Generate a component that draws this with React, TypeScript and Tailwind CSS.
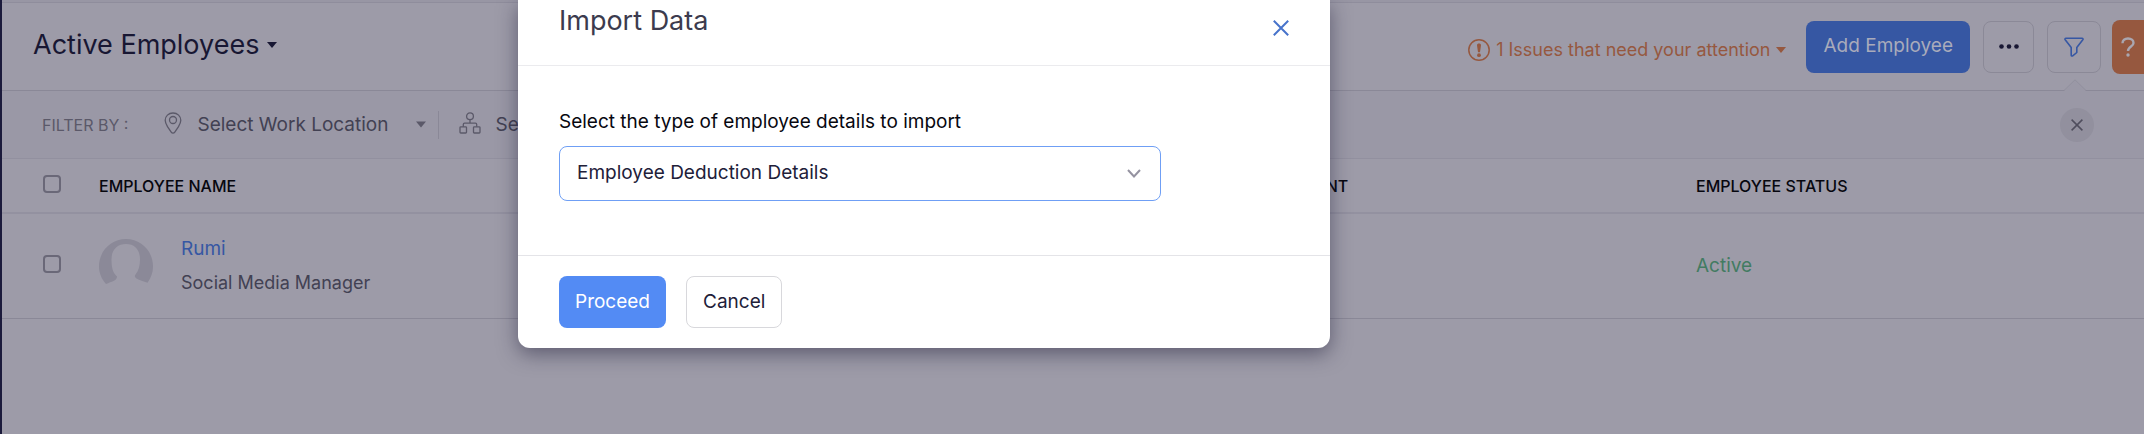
import React from "react";

function Caret({ className = "" }: { className?: string }) {
  return (
    <svg viewBox="0 0 10 6" className={className} fill="currentColor" aria-hidden="true">
      <path d="M0 0h10L5 6z" />
    </svg>
  );
}

function PinIcon() {
  return (
    <svg viewBox="0 0 18 22" className="h-[22px] w-[18px] shrink-0" fill="none" stroke="currentColor" strokeWidth="1.3" aria-hidden="true">
      <path d="M9 1C4.500 1 1.200 4.200 1.200 8.300c0 2 .9 4 2.300 6.400l3.700 5.400c1 1.400 2.600 1.400 3.600 0l3.700-5.400c1.400-2.400 2.300-4.400 2.300-6.400C16.800 4.200 13.500 1 9 1z" />
      <circle cx="9" cy="8" r="3.500" />
    </svg>
  );
}

function OrgIcon() {
  return (
    <svg viewBox="0 0 22 22" className="h-[22px] w-[22px] shrink-0" fill="none" stroke="currentColor" strokeWidth="1.3" aria-hidden="true">
      <circle cx="11" cy="4.300" r="3.400" />
      <path d="M11 7.700v3.500M4.300 14.800v-2.300c0-.8.500-1.300 1.300-1.300h10.800c.8 0 1.300.5 1.300 1.300v2.300" />
      <rect x="1" y="14.800" width="6.500" height="6.200" rx=".8" />
      <rect x="14.500" y="14.800" width="6.500" height="6.200" rx=".8" />
    </svg>
  );
}

function Avatar() {
  return (
    <svg viewBox="0 0 54 54" className="h-[54px] w-[54px] shrink-0" aria-hidden="true">
      <path
        fill="#8b8998"
        d="M7 45C2.500 40 0 34 0 27.500 0 12 12 0 27 0s27 12 27 27.500c0 6-2 11.500-5.500 16.200-4-1.700-8-2-11-4.200-1.600-1.200-2.200-2.600-1-4 3-3.500 4.500-9 4.500-15C41 11 36 5 27 5s-14.500 6-14.500 15.500c0 7 1 12.500 4.500 16 1 .8 1.500 1.300.8 2-.3 3-5 4-10.800 6.500z"
      />
    </svg>
  );
}

function Cross({ className = "" }: { className?: string }) {
  return (
    <svg viewBox="0 0 16 16" className={className} fill="none" stroke="currentColor" strokeWidth="2" aria-hidden="true">
      <path d="M.8.8l14.400 14.400M15.200.8L.8 15.200" />
    </svg>
  );
}

function PageHeader() {
  return (
    <header className="flex h-[88px] items-center border-b border-[#8a8897] pl-[31px]">
      <h1>
        <button type="button" className="flex items-center gap-2 pb-1 text-[27px] leading-8 text-[#181733]">
          Active Employees
          <Caret className="h-[6px] w-[10px]" />
        </button>
      </h1>
      <div className="ml-auto flex items-center">
        <button type="button" className="mr-5 flex items-center gap-[6px] pt-[6px] text-[18px] leading-6 text-[#96583f]">
          <svg viewBox="0 0 22 22" className="h-[22px] w-[22px]" aria-hidden="true">
            <circle cx="11" cy="11" r="10.200" fill="none" stroke="currentColor" strokeWidth="1.500" />
            <path fill="currentColor" d="M9 6.200C9 5 9.800 4.400 11 4.400s2 .6 2 1.800l-.9 6.200c-.1 1.200-2.100 1.200-2.200 0z" />
            <circle cx="11" cy="16.200" r="1.900" fill="currentColor" />
          </svg>
          1 Issues that need your attention
          <Caret className="h-[6px] w-[10px]" />
        </button>
        <button type="button" className="mr-[13px] h-[52px] rounded-lg bg-[#3657a3] px-[17px] text-[19px] text-[#a9abbb]">
          Add Employee
        </button>
        <button type="button" aria-label="More actions" className="mr-[13px] flex h-[52px] w-[51px] items-center justify-center rounded-lg border border-[#8b8997]">
          <svg viewBox="0 0 20 5" className="h-[5px] w-[20px]" fill="#181733" aria-hidden="true">
            <circle cx="2.500" cy="2.500" r="2.300" />
            <circle cx="10" cy="2.500" r="2.300" />
            <circle cx="17.500" cy="2.500" r="2.300" />
          </svg>
        </button>
        <button type="button" aria-label="Filter" className="mr-[11px] flex h-[52px] w-[54px] items-center justify-center rounded-lg border border-[#8b8997] text-[#3657a3]">
          <svg viewBox="0 0 20 20" className="h-[20px] w-[20px]" fill="none" stroke="currentColor" strokeWidth="1.600" strokeLinejoin="round" aria-hidden="true">
            <path d="M2 1.200h16c1 0 1.300.9.800 1.600l-6 7.700v5L8.700 18.800c-.7.500-1.500.2-1.500-.6v-7.700l-6-7.700C.7 2.100 1 1.200 2 1.200z" />
          </svg>
        </button>
        <button type="button" aria-label="Help" className="flex h-[54px] w-8 items-center rounded-l-lg bg-[#96583f] pl-[9px] text-[#a9a6b0]">
          <svg viewBox="0 0 14 20" className="h-[20px] w-[14px]" fill="none" stroke="currentColor" strokeWidth="2.400" aria-hidden="true">
            <path d="M1.500 6.200C1.500 3.300 3.800 1.500 7 1.500s5.500 1.800 5.500 4.500C12.500 9.500 7 9.500 7 14" />
            <circle cx="7" cy="18" r="1.700" fill="currentColor" stroke="none" />
          </svg>
        </button>
      </div>
    </header>
  );
}

function FilterBar() {
  return (
    <div className="relative flex h-[68px] items-center border-b border-[#92909f] bg-[#9a98a6] pl-10 text-[#5b5969]">
      {/* pointer towards the filter button */}
      <svg viewBox="0 0 22 12" className="absolute -top-3 right-[58px] h-3 w-[22px]" aria-hidden="true">
        <path d="M0 12L11 1l11 11z" fill="#9a98a6" />
        <path d="M0 11.500L11 .8l11 10.700" fill="none" stroke="#918f9d" />
      </svg>
      <span className="mr-9 text-[16px]">FILTER BY :</span>
      <label htmlFor="work-location" className="mr-[15px] pb-1">
        <PinIcon />
      </label>
      <div className="flex items-center">
        <select id="work-location" aria-label="Work location" className="w-[219px] appearance-none text-[19px] leading-7 text-[#424153] focus:outline-none">
          <option>Select Work Location</option>
        </select>
        <Caret className="h-[7px] w-[10px]" />
      </div>
      <span className="mx-3 h-7 w-px bg-[#8a8897]" />
      <label htmlFor="department" className="mr-[14px] ml-2 pb-1">
        <OrgIcon />
      </label>
      <select id="department" aria-label="Department" className="w-[219px] appearance-none text-[19px] leading-7 text-[#424153] focus:outline-none">
        <option>Select Department</option>
      </select>
      <button type="button" aria-label="Close filters" className="mr-[50px] ml-auto flex h-[34px] w-[34px] items-center justify-center rounded-full bg-[#92909e] text-[#4f4d5d]">
        <Cross className="h-3 w-3" />
      </button>
    </div>
  );
}

function Check({ label }: { label: string }) {
  return (
    <input
      type="checkbox"
      aria-label={label}
      className="block h-[18px] w-[18px] appearance-none rounded border-2 border-[#6a6878]"
    />
  );
}

function EmployeeTable() {
  return (
    <table className="w-full table-fixed border-collapse text-left">
      <colgroup>
        <col className="w-[97px]" />
        <col />
        <col className="w-[457px]" />
        <col className="w-[448px]" />
      </colgroup>
      <thead>
        <tr className="h-[54px] border-b-2 border-[#9391a0] text-[16px] text-[#07070f]">
          <th className="pb-1 pl-[41px]"><Check label="Select all employees" /></th>
          <th className="font-medium">EMPLOYEE NAME</th>
          <th className="font-medium">DEPARTMENT</th>
          <th className="font-medium">EMPLOYEE STATUS</th>
        </tr>
      </thead>
      <tbody>
        <tr className="h-[105px] border-b border-[#8a8897]">
          <td className="pb-1 pl-[41px]"><Check label="Select Rumi" /></td>
          <td>
            <div className="flex items-center gap-7">
              <Avatar />
              <div className="flex flex-col gap-[10px]">
                <a href="#rumi" className="text-[19px] leading-6 text-[#3657a3]">Rumi</a>
                <span className="text-[18px] leading-6 text-[#424153]">Social Media Manager</span>
              </div>
            </div>
          </td>
          <td />
          <td className="text-[19px] text-[#437b62]">Active</td>
        </tr>
      </tbody>
    </table>
  );
}

function ImportDialog() {
  return (
    <div
      role="dialog"
      aria-labelledby="import-title"
      className="absolute top-0 left-[516px] w-[812px] rounded-b-xl bg-white shadow-[0_6px_20px_rgba(30,28,55,0.5)]"
    >
      <div className="flex h-[66px] items-center justify-between border-b border-[#ebebee] px-[41px] pb-6">
        <h2 id="import-title" className="text-[27px] leading-8 text-[#3c3b4e]">Import Data</h2>
        <button type="button" aria-label="Close" className="pt-[14px] text-[#4773cb]">
          <Cross className="h-4 w-4" />
        </button>
      </div>
      <div className="px-[41px] pt-[42px] pb-[54px]">
        <label htmlFor="import-type" className="block text-[19px] leading-7 text-[#07070f]">
          Select the type of employee details to import
        </label>
        <div className="relative mt-[10px] w-[602px]">
          <select id="import-type" className="h-[55px] w-full appearance-none rounded-lg border border-[#6f9ff5] bg-white pr-12 pl-[17px] text-[19px] text-[#212039] focus:outline-none">
            <option>Employee Deduction Details</option>
          </select>
          <svg viewBox="0 0 14 9" className="pointer-events-none absolute top-[23px] right-5 h-[9px] w-[14px]" fill="none" stroke="#9593a1" strokeWidth="2" aria-hidden="true">
            <path d="M1 1l6 6.500L13 1" />
          </svg>
        </div>
      </div>
      <div className="flex gap-5 border-t border-[#e4e4e8] px-[41px] py-5 text-[19px]">
        <button type="button" className="h-[52px] rounded-lg bg-[#538bf4] px-4 text-white">Proceed</button>
        <button type="button" className="h-[52px] rounded-lg border border-[#d8d8dc] px-4 text-[#212039]">Cancel</button>
      </div>
    </div>
  );
}

export default function App() {
  return (
    <div className="relative min-h-screen overflow-hidden border-l-2 border-[#1b1a3b] bg-[#9d9ba8] font-['Inter',sans-serif]">
      <div className="h-[3px] border-b border-[#8f8d9c] bg-[#9896a4]" />
      <PageHeader />
      <FilterBar />
      <EmployeeTable />
      <ImportDialog />
    </div>
  );
}
